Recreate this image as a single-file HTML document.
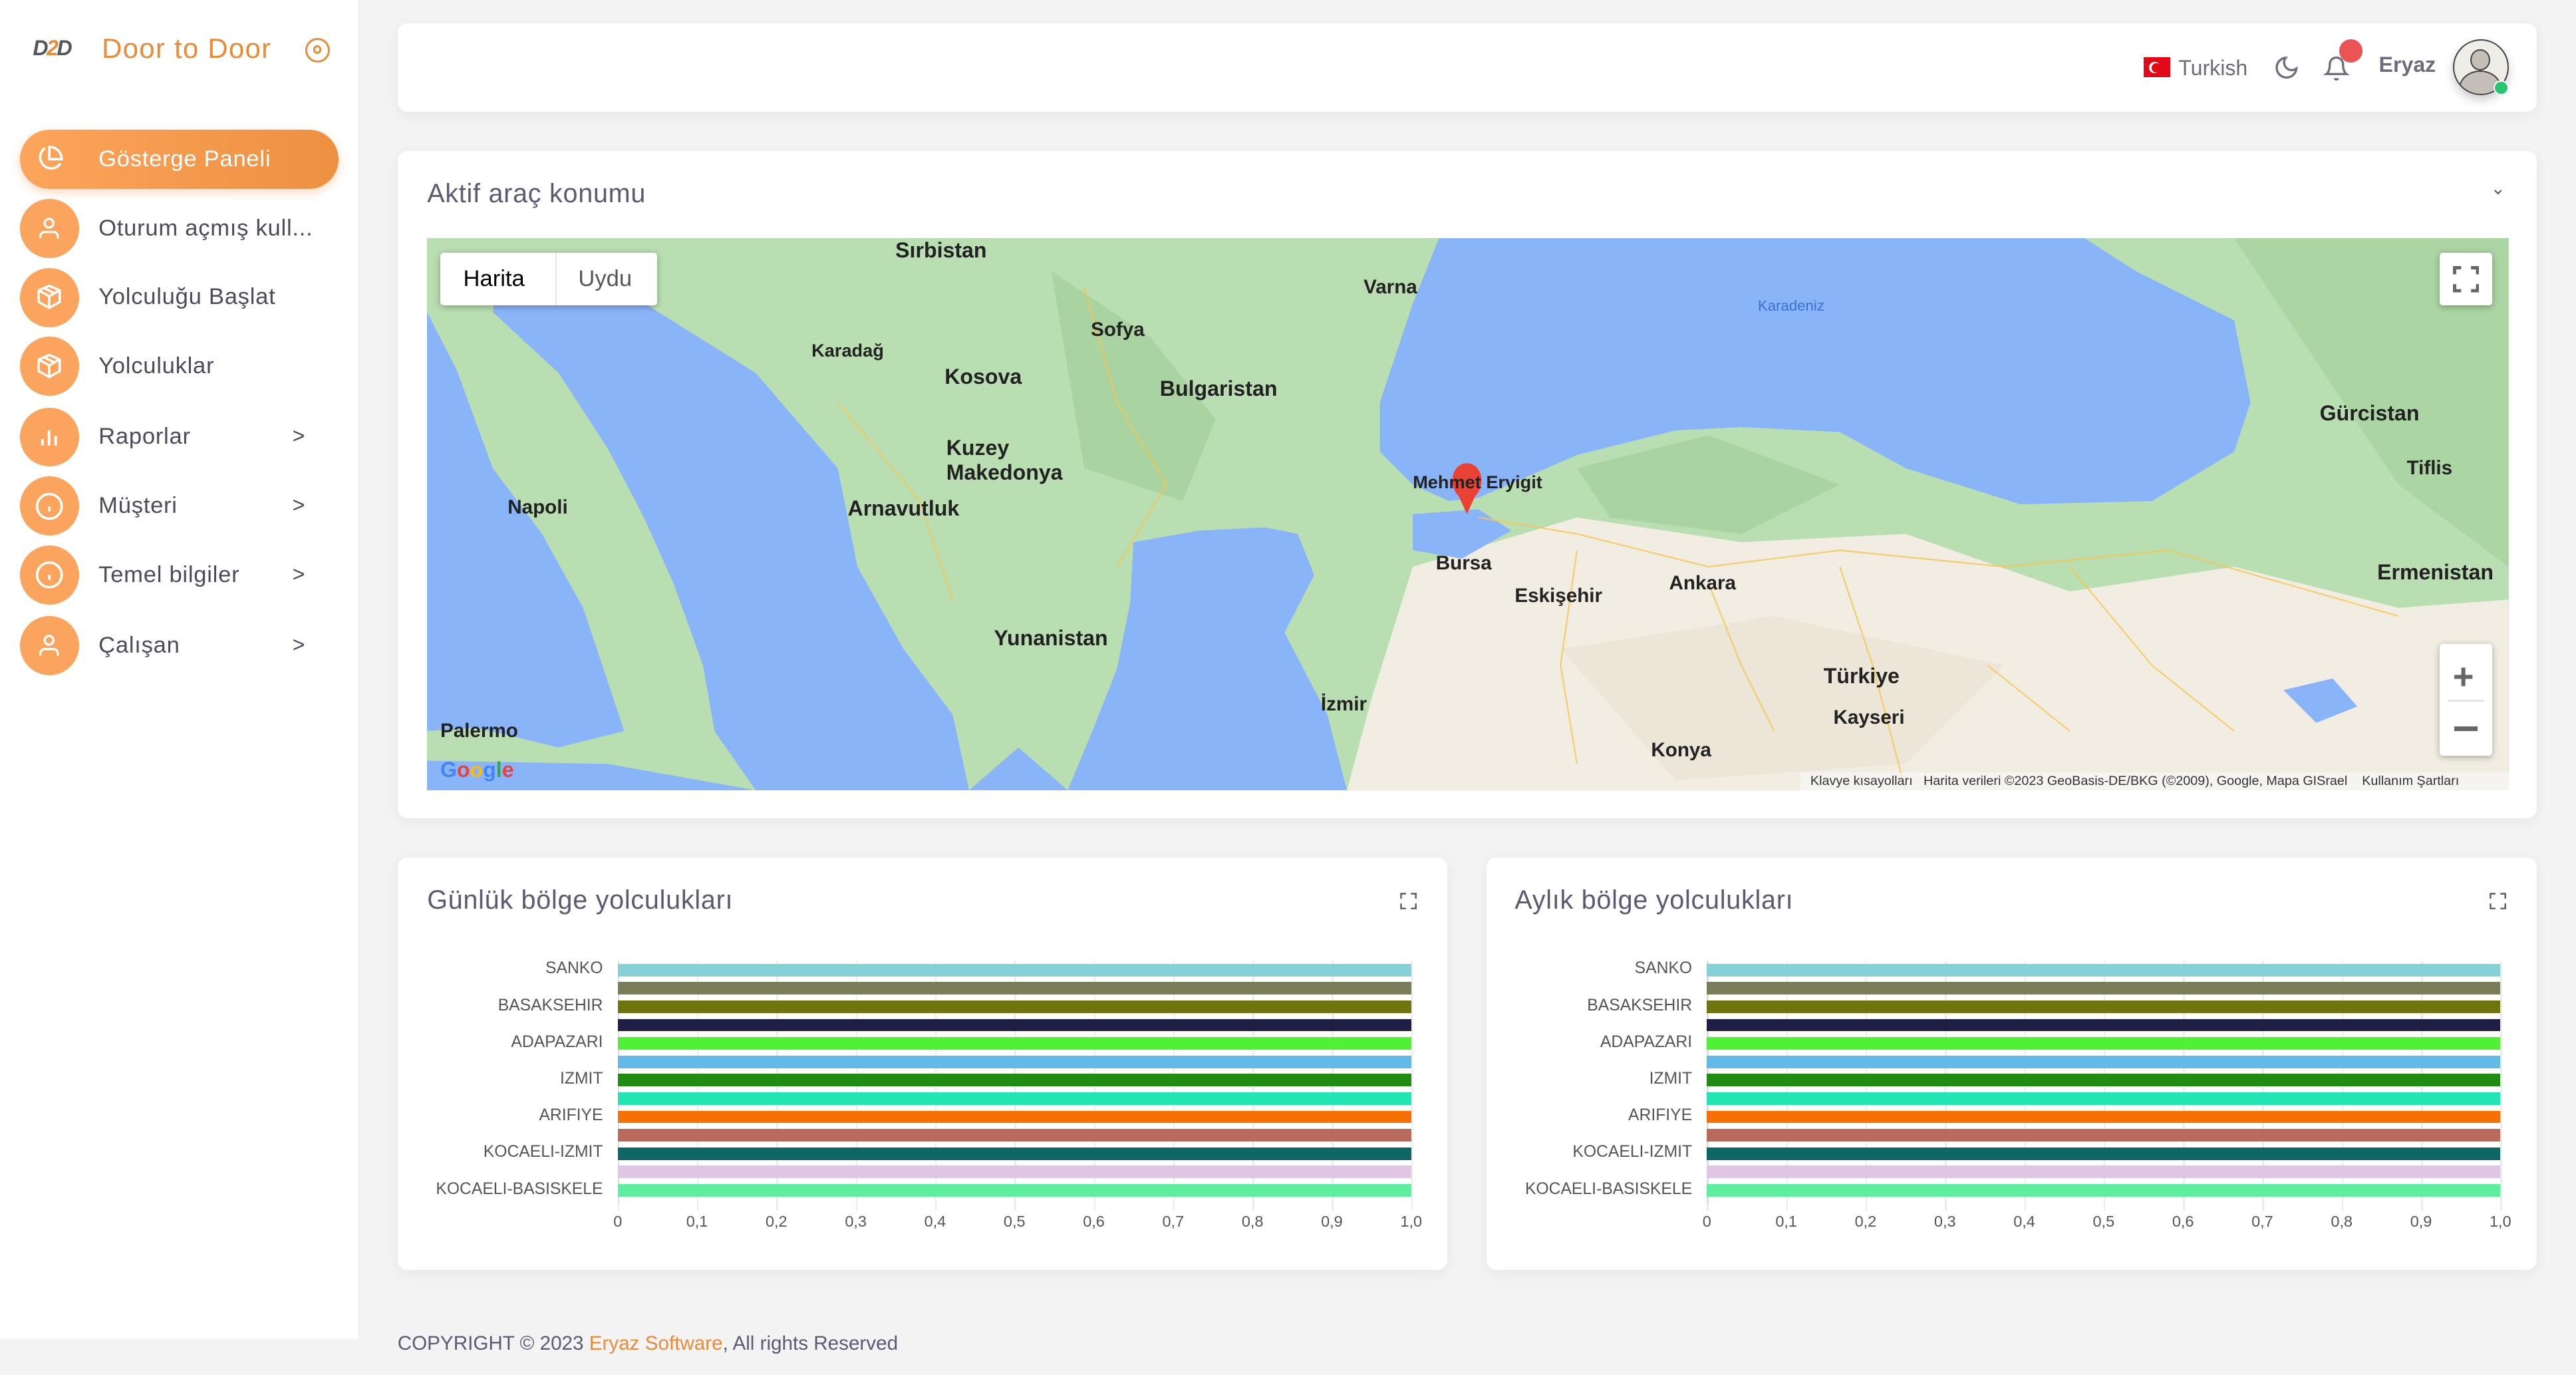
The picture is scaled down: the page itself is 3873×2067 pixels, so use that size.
<!DOCTYPE html>
<html><head><meta charset="utf-8">
<style>
*{margin:0;padding:0;box-sizing:border-box}
html,body{width:3873px;height:2067px;overflow:hidden;background:#f3f3f3}
#r{zoom:2.47;width:1568px;height:837px;position:relative;font-family:"Liberation Sans",sans-serif;color:#5e5873}
.a{position:absolute}
.side{left:0;top:0;width:218px;height:815px;background:#fff}
.card{background:#fff;border-radius:6px;box-shadow:0 2px 8px rgba(34,41,47,.06)}
.mi{position:absolute;left:12px;height:36px;width:194px}
.ic{position:absolute;left:0;top:0;width:36px;height:36px;border-radius:50%;background:#fba45d;display:flex;align-items:center;justify-content:center}
.mt{position:absolute;left:48px;top:10px;font-size:14px;color:#4b4b5c;letter-spacing:.3px;white-space:nowrap}
.chev{position:absolute;left:166px;top:10px;font-size:13px;color:#4b4b5c}
.lbl{position:absolute;font-size:10px;color:#555;text-align:right;width:110px;font-family:"Liberation Sans Narrow","Liberation Sans",sans-serif}
.tk{position:absolute;font-size:9.5px;color:#555;font-family:"Liberation Sans Narrow","Liberation Sans",sans-serif}
.mlab{position:absolute;font-size:10px;color:#333;white-space:nowrap}
.mb{position:absolute;font-size:13px;font-weight:bold;color:#222;white-space:nowrap;font-family:"Liberation Sans Narrow","Liberation Sans",sans-serif}
</style></head><body><div id="r">

<div class="a side">
  <div class="a" style="left:20px;top:22px;font-size:13px;font-weight:bold;font-style:italic;color:#55565b;letter-spacing:-1px">D<span style="color:#ec8b37">2</span>D</div>
  <div class="a" style="left:62px;top:20px;font-size:17px;color:#ec8b37;letter-spacing:.5px">Door to Door</div>
  <div class="a" style="left:186px;top:23px;width:15px;height:15px;border:1.6px solid #ec8b37;border-radius:50%"><div style="position:absolute;left:3.5px;top:3.5px;width:5px;height:5px;border:1.5px solid #ec8b37;border-radius:50%"></div></div>

  <div class="mi" style="top:79px;border-radius:18px;background:linear-gradient(90deg,#fca55b,#ed9041);box-shadow:0 2px 6px rgba(237,144,65,.35)">
    <div class="ic" style="background:none"><svg width="18" height="18" viewBox="0 0 24 24" fill="none" stroke="#fff" stroke-width="2"><path d="M21 15.5A9 9 0 1 1 8.5 3"/><path d="M12 2a10 10 0 0 1 10 10H12z"/></svg></div>
    <div class="mt" style="color:#fff">Gösterge Paneli</div>
  </div>
  <div class="mi" style="top:121px"><div class="ic"><svg width="16" height="16" viewBox="0 0 24 24" fill="none" stroke="#fff" stroke-width="2"><circle cx="12" cy="7" r="4"/><path d="M4 21v-2a4 4 0 0 1 4-4h8a4 4 0 0 1 4 4v2"/></svg></div><div class="mt">Oturum açmış kull...</div></div>
  <div class="mi" style="top:163px"><div class="ic"><svg width="17" height="17" viewBox="0 0 24 24" fill="none" stroke="#fff" stroke-width="2"><path d="M12 2l9 4v10l-9 5-9-5V6z"/><path d="M3 6l9 5 9-5M12 11v10M7.5 4l9 4.5"/></svg></div><div class="mt">Yolculuğu Başlat</div></div>
  <div class="mi" style="top:205px"><div class="ic"><svg width="17" height="17" viewBox="0 0 24 24" fill="none" stroke="#fff" stroke-width="2"><path d="M12 2l9 4v10l-9 5-9-5V6z"/><path d="M3 6l9 5 9-5M12 11v10M7.5 4l9 4.5"/></svg></div><div class="mt">Yolculuklar</div></div>
  <div class="mi" style="top:248px"><div class="ic"><svg width="16" height="16" viewBox="0 0 24 24" fill="none" stroke="#fff" stroke-width="2.4"><path d="M6 20v-6M12 20V6M18 20v-9"/></svg></div><div class="mt">Raporlar</div><div class="chev">&gt;</div></div>
  <div class="mi" style="top:290px"><div class="ic"><svg width="18" height="18" viewBox="0 0 24 24" fill="none" stroke="#fff" stroke-width="2"><circle cx="12" cy="12" r="10"/><path d="M12 16v-4M12 8h.01"/></svg></div><div class="mt">Müşteri</div><div class="chev">&gt;</div></div>
  <div class="mi" style="top:332px"><div class="ic"><svg width="18" height="18" viewBox="0 0 24 24" fill="none" stroke="#fff" stroke-width="2"><circle cx="12" cy="12" r="10"/><path d="M12 16v-4M12 8h.01"/></svg></div><div class="mt">Temel bilgiler</div><div class="chev">&gt;</div></div>
  <div class="mi" style="top:375px"><div class="ic"><svg width="16" height="16" viewBox="0 0 24 24" fill="none" stroke="#fff" stroke-width="2"><circle cx="12" cy="7" r="4"/><path d="M4 21v-2a4 4 0 0 1 4-4h8a4 4 0 0 1 4 4v2"/></svg></div><div class="mt">Çalışan</div><div class="chev">&gt;</div></div>
</div>

<!-- header -->
<div class="a card" style="left:242px;top:14px;width:1302px;height:54px">
  <div class="a" style="left:1063px;top:21px;width:16px;height:12px;background:#e30a17"><div style="position:absolute;left:3px;top:2.5px;width:7px;height:7px;border-radius:50%;background:#fff"></div><div style="position:absolute;left:4.8px;top:3.5px;width:5.5px;height:5.5px;border-radius:50%;background:#e30a17"></div></div>
  <div class="a" style="left:1084px;top:20px;font-size:13px;color:#6e6b7b">Turkish</div>
  <svg class="a" style="left:1142px;top:19px" width="16" height="16" viewBox="0 0 24 24" fill="none" stroke="#6e6b7b" stroke-width="2"><path d="M21 12.8A9 9 0 1 1 11.2 3a7 7 0 0 0 9.8 9.8z"/></svg>
  <svg class="a" style="left:1172px;top:19px" width="16" height="17" viewBox="0 0 24 24" fill="none" stroke="#6e6b7b" stroke-width="2"><path d="M18 8A6 6 0 0 0 6 8c0 7-3 9-3 9h18s-3-2-3-9M13.7 21a2 2 0 0 1-3.4 0"/></svg>
  <div class="a" style="left:1182px;top:10px;width:14px;height:14px;border-radius:50%;background:#ea5455"></div>
  <div class="a" style="left:1206px;top:18px;font-size:13px;font-weight:bold;color:#6e6b7b">Eryaz</div>
  <div class="a" style="left:1251px;top:10px;width:34px;height:34px;border-radius:50%;background:#efede8;border:1.2px solid #444;overflow:hidden;box-shadow:0 3px 6px rgba(0,0,0,.2)">
    <div style="position:absolute;left:10px;top:5px;width:12px;height:13px;border-radius:50%;background:#c4c0b8;border:1px solid #444"></div>
    <div style="position:absolute;left:3px;top:18px;width:26px;height:22px;border-radius:50% 50% 0 0;background:#c4c0b8;border:1px solid #444"></div>
  </div>
  <div class="a" style="left:1276px;top:35px;width:9px;height:9px;border-radius:50%;background:#28c76f;border:1px solid #fff"></div>
</div>

<!-- map card -->
<div class="a card" style="left:242px;top:92px;width:1302px;height:406px">
  <div class="a" style="left:18px;top:17px;font-size:16px;color:#5e5873;letter-spacing:.3px">Aktif araç konumu</div>
  <div class="a" style="left:1274px;top:16px;font-size:11px;color:#5e5873">&#8964;</div>
</div>
<div class="a" style="left:260px;top:145px;width:1267px;height:336px;overflow:hidden;background:#b9deb1">
<svg width="1267" height="336" viewBox="0 0 1267 336" style="position:absolute;left:0;top:0">
  <path d="M600 200 L700 170 L800 185 L900 180 L1000 215 L1100 200 L1200 225 L1267 220 L1267 336 L560 336 L575 280 Z" fill="#f1ede2"/>
  <path d="M690 250 L820 230 L960 260 L900 320 L760 330 Z" fill="#ece6d8"/>
  <path d="M380 20 L440 60 L480 110 L460 160 L400 140 Z" fill="#a2cf98" opacity=".7"/>
  <path d="M700 140 L780 120 L860 150 L800 180 L720 170 Z" fill="#a2cf98" opacity=".7"/>
  <path d="M1100 0 L1267 0 L1267 200 L1200 150 Z" fill="#a2cf98" opacity=".6"/>
  <path d="M616 0 L1009 0 L1040 20 L1100 50 L1110 100 L1100 130 L1050 160 L970 162 L900 140 L860 118 L800 115 L760 117 L700 132 L640 158 L622 160 L600 150 L580 130 L580 100 L590 70 L600 40 Z" fill="#8ab4f8"/>
  <path d="M600 168 L640 165 L660 178 L630 195 L600 190 Z" fill="#8ab4f8"/>
  <path d="M430 185 L470 178 L510 176 L530 180 L540 205 L522 240 L548 290 L560 336 L390 336 L405 300 L420 262 L428 222 Z" fill="#8ab4f8"/>
  <path d="M45 15 L120 32 L200 82 L250 140 L262 200 L290 250 L320 290 L330 336 L200 336 L175 300 L168 260 L150 210 L132 170 L110 128 L80 82 L40 45 Z" fill="#8ab4f8"/>
  <path d="M0 45 L18 80 L40 140 L70 180 L95 225 L110 270 L120 300 L80 310 L30 298 L0 300 Z" fill="#8ab4f8"/>
  <path d="M0 318 L110 320 L200 336 L0 336 Z" fill="#8ab4f8"/>
  <path d="M330 336 L360 310 L390 336 Z" fill="#8ab4f8"/>
  <path d="M1130 275 L1160 268 L1175 285 L1150 295 Z" fill="#8ab4f8"/>
  <g fill="none" stroke="#f7c64f" stroke-width="0.9" opacity=".8">
    <path d="M640 170 L700 180 L780 200 L860 190 L960 200 L1060 190 L1200 230"/>
    <path d="M780 210 L800 260 L820 300 M700 190 L690 260 L700 320 M860 200 L880 260 L900 336"/>
    <path d="M400 30 L420 100 L450 150 L420 200 M250 100 L300 160 L320 220"/>
    <path d="M1000 200 L1050 260 L1100 300 M950 260 L1000 300"/>
  </g>
  <path d="M633 137 C624 137 621 150 628 157 L633 168 L638 157 C645 150 642 137 633 137Z" fill="#ea4335"/>
</svg>
  <div class="a" style="left:8px;top:9px;width:132px;height:32px;background:#fff;border-radius:2px;box-shadow:0 1px 4px rgba(0,0,0,.3)"><div class="a" style="left:14px;top:8px;font-size:14px;color:#000">Harita</div><div class="a" style="left:70px;top:0;width:1px;height:32px;background:#e6e6e6"></div><div class="a" style="left:84px;top:8px;font-size:14px;color:#565656">Uydu</div></div>
  <div class="a" style="left:1225px;top:9px;width:32px;height:32px;background:#fff;border-radius:2px;box-shadow:0 1px 4px rgba(0,0,0,.3)"><svg style="position:absolute;left:8px;top:8px" width="16" height="16" viewBox="0 0 16 16" fill="none" stroke="#666" stroke-width="2"><path d="M1 5V1h4M11 1h4v4M15 11v4h-4M5 15H1v-4"/></svg></div>
  <div class="a" style="left:1225px;top:247px;width:32px;height:68px;background:#fff;border-radius:2px;box-shadow:0 1px 4px rgba(0,0,0,.3)"><div class="a" style="left:8px;top:7px;font-size:22px;font-weight:bold;color:#666">+</div><div class="a" style="left:5px;top:34px;width:22px;height:1px;background:#e6e6e6"></div><div class="a" style="left:9px;top:50px;width:14px;height:3px;background:#666"></div></div>
  <div class="mb" style="left:285px;top:0px">Sırbistan</div>
  <div class="mb" style="left:446px;top:84px">Bulgaristan</div>
  <div class="mb" style="left:315px;top:77px">Kosova</div>
  <div class="mb" style="left:316px;top:120px">Kuzey<br>Makedonya</div>
  <div class="mb" style="left:256px;top:157px">Arnavutluk</div>
  <div class="mb" style="left:345px;top:236px">Yunanistan</div>
  <div class="mb" style="left:850px;top:259px">Türkiye</div>
  <div class="mb" style="left:1152px;top:99px">Gürcistan</div>
  <div class="mb" style="left:1187px;top:196px">Ermenistan</div>
  <div class="mb" style="left:234px;top:62px;font-size:11px">Karadağ</div>
  <div class="mb" style="left:404px;top:49px;font-size:12px">Sofya</div>
  <div class="mb" style="left:756px;top:203px;font-size:12px">Ankara</div>
  <div class="mb" style="left:614px;top:191px;font-size:12px">Bursa</div>
  <div class="mb" style="left:662px;top:211px;font-size:12px">Eskişehir</div>
  <div class="mb" style="left:856px;top:285px;font-size:12px">Kayseri</div>
  <div class="mb" style="left:745px;top:305px;font-size:12px">Konya</div>
  <div class="mb" style="left:544px;top:277px;font-size:12px">İzmir</div>
  <div class="mb" style="left:570px;top:23px;font-size:12px">Varna</div>
  <div class="mb" style="left:1205px;top:133px;font-size:12px">Tiflis</div>
  <div class="mb" style="left:49px;top:157px;font-size:12px">Napoli</div>
  <div class="mb" style="left:8px;top:293px;font-size:12px">Palermo</div>
  <div class="mb" style="left:600px;top:142px;font-size:11px">Mehmet Eryigit</div>
  <div class="mlab" style="left:810px;top:36px;font-size:9px;color:#3c6fd0">Karadeniz</div>
  <div class="a" style="left:8px;top:316px;font-size:13px;font-weight:bold;color:#4285f4">G<span style="color:#ea4335">o</span><span style="color:#fbbc05">o</span>g<span style="color:#34a853">l</span><span style="color:#ea4335">e</span></div>
  <div class="a" style="left:836px;top:325px;width:431px;height:11px;background:rgba(245,245,245,.75);font-size:8px;color:#333;padding-left:6px;white-space:nowrap;line-height:11px">Klavye kısayolları &nbsp; Harita verileri ©2023 GeoBasis-DE/BKG (©2009), Google, Mapa GISrael &nbsp;&nbsp; Kullanım Şartları</div>
</div>

<!-- chart cards -->
<div class="a card" style="left:242px;top:522px;width:639px;height:251px"></div>
<div class="a card" style="left:905px;top:522px;width:639px;height:251px"></div>
<div class="a" style="left:260px;top:539px;font-size:16px;color:#5e5873;letter-spacing:.3px">Günlük bölge yolculukları</div>
<div class="a" style="left:922px;top:539px;font-size:16px;color:#5e5873;letter-spacing:.3px">Aylık bölge yolculukları</div>
<svg class="a" style="left:852px;top:543px" width="11" height="11" viewBox="0 0 11 11" fill="none" stroke="#5e5873" stroke-width="1"><path d="M1 4V1h3M7 1h3v3M10 7v3H7M4 10H1V7"/></svg>
<svg class="a" style="left:1515px;top:543px" width="11" height="11" viewBox="0 0 11 11" fill="none" stroke="#5e5873" stroke-width="1"><path d="M1 4V1h3M7 1h3v3M10 7v3H7M4 10H1V7"/></svg>

<div id="c1" class="a" style="left:0;top:0"></div>
<div id="c2" class="a" style="left:663px;top:0"></div>

<div class="a" style="left:242px;top:811px;font-size:12px;color:#5e5873">COPYRIGHT © 2023 <span style="color:#ec8b37">Eryaz Software</span>, All rights Reserved</div>
</div>
<script>
var cols=["#86d0d8","#7b7d5a","#6f740f","#1f1f45","#50f035","#62bae6","#218c12","#22e5b3","#f77006","#b96a5a","#0e6667","#dec6e4","#5eee9d"];
var labs=["SANKO","BASAKSEHIR","ADAPAZARI","IZMIT","ARIFIYE","KOCAELI-IZMIT","KOCAELI-BASISKELE"];
["c1","c2"].forEach(function(id){
 var h="";
 for(var i=0;i<=10;i++){var x=376+i*48.3;h+='<div class="a" style="left:'+x+'px;top:585px;width:1px;height:152px;background:#ececec"></div>';
  h+='<div class="tk" style="left:'+(x-10)+'px;top:738px;width:20px;text-align:center">'+(i==0?"0":(i==10?"1,0":"0,"+i))+'</div>';}
 h+='<div class="a" style="left:376px;top:585px;width:1px;height:148px;background:#ddd"></div>';
 for(var i=0;i<13;i++){var y=586.6+i*11.17;h+='<div class="a" style="left:376px;top:'+y+'px;width:483px;height:7.6px;background:'+cols[i]+'"></div>';}
 for(var j=0;j<7;j++){var y=584+j*22.34;h+='<div class="lbl" style="left:257px;top:'+y+'px">'+labs[j]+'</div>';}
 document.getElementById(id).innerHTML=h;});
</script>
</body></html>
